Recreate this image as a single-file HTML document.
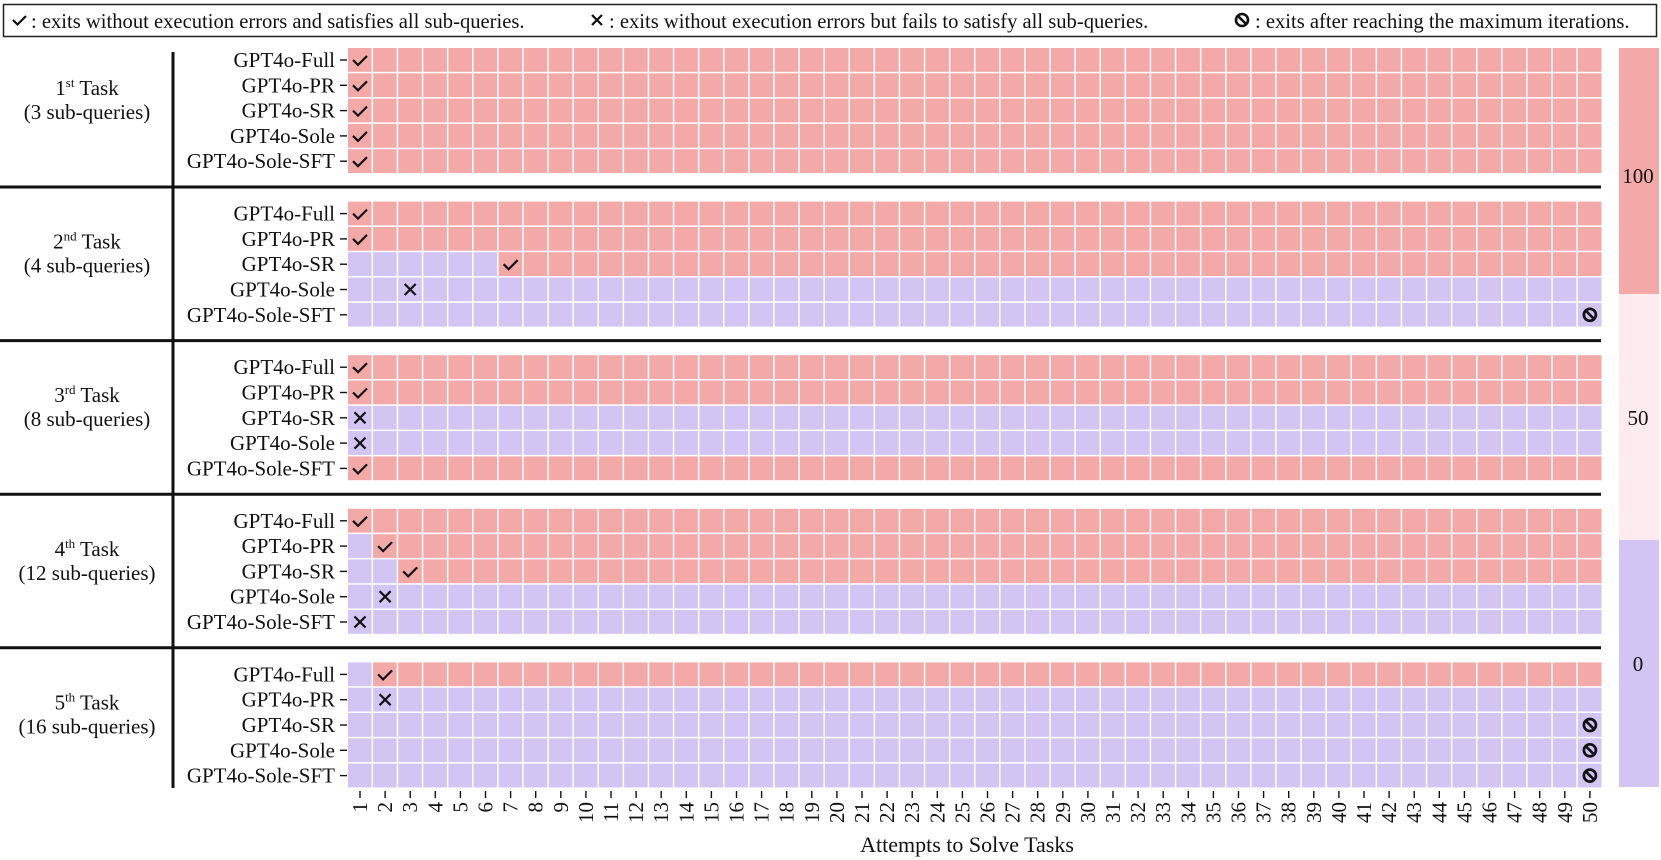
<!DOCTYPE html>
<html><head><meta charset="utf-8"><style>
html,body{margin:0;padding:0;background:#fff;width:1661px;height:860px;overflow:hidden}
svg{display:block}
text{font-family:"Liberation Serif",serif;fill:#111}
</style></head><body>
<svg id="s" width="1661" height="860" xmlns="http://www.w3.org/2000/svg">
<rect x="3.5" y="4.5" width="1653" height="32" fill="#fff" stroke="#222" stroke-width="1.5"/>
<path d="M13 20 l4.5 4.5 l8.5 -8.5" stroke="#111" stroke-width="2.2" fill="none"/>
<text x="31" y="28" font-size="20.6">: exits without execution errors and satisfies all sub-queries.</text>
<path d="M592 15 l10 10 M602 15 l-10 10" stroke="#111" stroke-width="2.2"/>
<text x="609" y="28" font-size="20.6">: exits without execution errors but fails to satisfy all sub-queries.</text>
<circle cx="1242" cy="20" r="6" stroke="#111" stroke-width="2.6" fill="none"/>
<path d="M1238 16 l8 8" stroke="#111" stroke-width="2.6"/>
<text x="1255" y="28" font-size="20.6">: exits after reaching the maximum iterations.</text>
<rect x="1619" y="48" width="40" height="246" fill="#f2a9a7"/>
<rect x="1619" y="294" width="40" height="246" fill="#fdebf0"/>
<rect x="1619" y="540" width="40" height="247" fill="#d3c5f3"/>
<text x="1638" y="183" font-size="21" text-anchor="middle">100</text>
<text x="1638" y="425" font-size="21" text-anchor="middle">50</text>
<text x="1638" y="671" font-size="21" text-anchor="middle">0</text>
<line x1="173" y1="52" x2="173" y2="788" stroke="#111" stroke-width="3"/>
<text x="967" y="852" font-size="22" text-anchor="middle">Attempts to Solve Tasks</text>
<g id="g"></g>
</svg>
<script>
var NS="http://www.w3.org/2000/svg",g=document.getElementById("g");
function el(t,a,txt){var e=document.createElementNS(NS,t);for(var k in a)e.setAttribute(k,a[k]);if(txt!=null)e.textContent=txt;g.appendChild(e);return e;}
var R="#f2a9a7",P="#d3c5f3",X0=348,PX=25.1,PY=25.3;
var names=["GPT4o-Full","GPT4o-PR","GPT4o-SR","GPT4o-Sole","GPT4o-Sole-SFT"];
var tasks=[
 {t:"1",s:"st",q:"(3 sub-queries)",r:[[1,"c",1],[1,"c",1],[1,"c",1],[1,"c",1],[1,"c",1]]},
 {t:"2",s:"nd",q:"(4 sub-queries)",r:[[1,"c",1],[1,"c",1],[7,"c",7],[0,"x",3],[0,"b",50]]},
 {t:"3",s:"rd",q:"(8 sub-queries)",r:[[1,"c",1],[1,"c",1],[0,"x",1],[0,"x",1],[1,"c",1]]},
 {t:"4",s:"th",q:"(12 sub-queries)",r:[[1,"c",1],[2,"c",2],[3,"c",3],[0,"x",2],[0,"x",1]]},
 {t:"5",s:"th",q:"(16 sub-queries)",r:[[2,"c",2],[0,"x",2],[0,"b",50],[0,"b",50],[0,"b",50]]}
];
tasks.forEach(function(T,k){
 var y0=48+153.6*k;
 if(k<4){el("line",{x1:0,y1:y0+139,x2:1601,y2:y0+139,stroke:"#111","stroke-width":3});}
 var tx=el("text",{x:87,y:y0+47,"font-size":21,"text-anchor":"middle"});
 tx.innerHTML=T.t+'<tspan font-size="13" dy="-8">'+T.s+'</tspan><tspan dy="8"> Task</tspan>';
 el("text",{x:87,y:y0+71,"font-size":21,"text-anchor":"middle"},T.q);
 T.r.forEach(function(r,j){
  var y=y0+j*PY;
  el("text",{x:335,y:y+19,"font-size":21,"text-anchor":"end"},names[j]);
  el("line",{x1:340,y1:y+12,x2:347,y2:y+12,stroke:"#111","stroke-width":1.4});
  for(var i=1;i<=50;i++){
   var c=(r[0]&&i>=r[0])?R:P;
   el("rect",{x:X0+(i-1)*PX,y:y,width:23.6,height:23.8,fill:c});
  }
  var cx=X0+(r[2]-1)*PX+12,cy=y+12;
  if(r[1]=="c")el("path",{d:"M"+(cx-7)+" "+(cy)+" l5 5 l9 -9",stroke:"#111","stroke-width":2.2,fill:"none"});
  else if(r[1]=="x")el("path",{d:"M"+(cx-5.5)+" "+(cy-5.5)+" l11 11 M"+(cx+5.5)+" "+(cy-5.5)+" l-11 11",stroke:"#111","stroke-width":2.2});
  else{el("circle",{cx:cx,cy:cy,r:6,stroke:"#111","stroke-width":2.7,fill:"none"});el("path",{d:"M"+(cx-4)+" "+(cy-4)+" l8 8",stroke:"#111","stroke-width":2.7});}
 });
});
for(var i=1;i<=50;i++){
 var cx=X0+(i-1)*PX+12;
 el("line",{x1:cx,y1:791,x2:cx,y2:798,stroke:"#111","stroke-width":1.4});
 el("text",{x:cx+7,y:802,"font-size":21,"text-anchor":"end",transform:"rotate(-90 "+(cx+7)+" 802)"},String(i));
}
</script>
</body></html>
